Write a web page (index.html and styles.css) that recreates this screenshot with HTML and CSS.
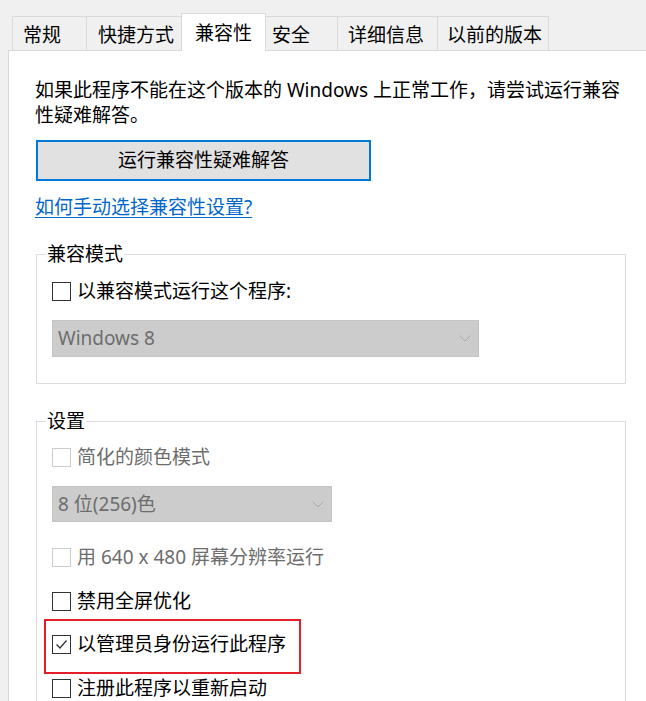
FILE: index.html
```html
<!DOCTYPE html>
<html lang="zh-CN">
<head>
<meta charset="utf-8">
<title>兼容性</title>
<link rel="stylesheet" href="styles.css">
</head>
<body>
<div class="tabs">
  <div class="tab tab-1">常规</div>
  <div class="tab tab-2">快捷方式</div>
  <div class="tab tab-3 active">兼容性</div>
  <div class="tab tab-4">安全</div>
  <div class="tab tab-5">详细信息</div>
  <div class="tab tab-6">以前的版本</div>
</div>
<div class="panel">
  <p class="intro">如果此程序不能在这个版本的 Windows 上正常工作，请尝试运行兼容性疑难解答。</p>
  <button class="btn" type="button">运行兼容性疑难解答</button>
  <a class="link" href="#">如何手动选择兼容性设置?</a>

  <fieldset class="group group-compat">
    <legend class="legend">兼容模式</legend>
    <div class="row row-first">
      <span class="box"></span><span class="label">以兼容模式运行这个程序:</span>
    </div>
    <div class="select select-wide">
      <span class="select-text">Windows 8</span>
      <svg class="chev" width="12" height="7" viewBox="0 0 12 7"><polyline points="0.5,0.5 6,6 11.5,0.5" fill="none" stroke="#a8a8a8" stroke-width="1"/></svg>
    </div>
  </fieldset>

  <fieldset class="group group-settings">
    <legend class="legend">设置</legend>
    <div class="row row-first2 disabled">
      <span class="box"></span><span class="label">简化的颜色模式</span>
    </div>
    <div class="select select-narrow">
      <span class="select-text">8 位(256)色</span>
      <svg class="chev" width="12" height="7" viewBox="0 0 12 7"><polyline points="0.5,0.5 6,6 11.5,0.5" fill="none" stroke="#a8a8a8" stroke-width="1"/></svg>
    </div>
    <div class="row row-640 disabled">
      <span class="box"></span><span class="label">用 640 x 480 屏幕分辨率运行</span>
    </div>
    <div class="row row-gap">
      <span class="box"></span><span class="label">禁用全屏优化</span>
    </div>
    <div class="row row-admin">
      <span class="box checked"><svg width="17" height="17" viewBox="0 0 17 17"><polyline points="3.5,8.5 7,12 13.5,4.5" fill="none" stroke="#333" stroke-width="1.3"/></svg></span><span class="label">以管理员身份运行此程序</span>
      <span class="annot"></span>
    </div>
    <div class="row row-gap">
      <span class="box"></span><span class="label">注册此程序以重新启动</span>
    </div>
  </fieldset>
</div>
</body>
</html>
```

FILE: styles.css
```css
html, body {
  margin: 0;
  padding: 0;
}
body {
  background: #f0f0f0;
  font-family: "Noto Sans", "Noto Sans CJK SC", sans-serif;
  font-size: 19px;
  line-height: 25px;
  color: #000;
  overflow: hidden;
  height: 701px;
}

/* Tabs */
.tabs {
  display: flex;
  align-items: flex-start;
  height: 50px;
  box-sizing: border-box;
  padding: 16px 0 0 12px;
}
.tab {
  box-sizing: border-box;
  height: 34px;
  border-top: 1px solid #d9d9d9;
  border-left: 1px solid #d9d9d9;
  background: #f0f0f0;
  padding-top: 3px;
  line-height: 30px;
  white-space: nowrap;
}
.tab-6 { border-right: 1px solid #d9d9d9; }
.tab-1 { width: 74px; padding-left: 10px; }
.tab-2 { width: 95px; padding-left: 11px; }
.tab-3 { width: 85px; padding-left: 13px; }
.tab-4 { width: 71px; padding-left: 6px; }
.tab-5 { width: 100px; padding-left: 10px; }
.tab-6 { width: 112px; padding-left: 9px; }
.tab.active {
  position: relative;
  z-index: 2;
  height: 38px;
  margin-top: -3px;
  background: #fff;
  border-right: 1px solid #d9d9d9;
  padding-top: 4px;
}
.tab.active + .tab { border-left: none; }

/* Panel */
.panel {
  margin-left: 8px;
  border-left: 1px solid #d9d9d9;
  border-top: 1px solid #d9d9d9;
  background: #fff;
  padding: 27px 0 0 26px;
  height: 623px;
  overflow: hidden;
}
.intro {
  margin: 0;
  width: 590px;
}
.btn {
  display: block;
  margin: 12px 0 0 1px;
  width: 335px;
  height: 41px;
  box-sizing: border-box;
  border: 2px solid #0078d7;
  background: #e1e1e1;
  font: inherit;
  color: #000;
  padding: 0;
  text-align: center;
}
.link {
  display: inline-block;
  margin-top: 14px;
  color: #0066cc;
  text-decoration: underline;
  text-underline-offset: 3px;
  text-decoration-thickness: 1px;
}

/* Group boxes */
.group {
  margin: 0 0 0 1px;
  width: 590px;
  box-sizing: border-box;
  border: 1px solid #dcdcdc;
  padding: 0 15px 26px 15px;
  min-inline-size: 0;
}
.group-compat { margin-top: 24px; }
.group-settings { margin-top: 27px; padding-bottom: 40px; }
.legend {
  padding: 0 1px;
  margin-left: -6px;
  line-height: 20px;
}

.row {
  position: relative;
  display: flex;
  align-items: center;
  height: 26px;
}
.row-first { margin-top: 14px; }
.row-first2 { margin-top: 13px; }
.row-640 { margin-top: 22px; }
.row-gap { margin-top: 18px; }
.row-admin { margin-top: 17px; }

.box {
  box-sizing: border-box;
  width: 19px;
  height: 19px;
  border: 1px solid #333;
  background: #fff;
  margin-right: 6px;
  flex: none;
  display: flex;
  align-items: center;
  justify-content: center;
}
.disabled .box { border-color: #cccccc; }
.disabled .label { color: #6d6d6d; }

.annot {
  position: absolute;
  left: -8px;
  top: -12px;
  width: 257px;
  height: 55px;
  box-sizing: border-box;
  border: 2px solid #e3202a;
}

/* Selects */
.select {
  display: flex;
  align-items: center;
  justify-content: space-between;
  box-sizing: border-box;
  background: #cccccc;
  border: 1px solid #c4c4c4;
  color: #6d6d6d;
  padding-left: 5px;
  margin-top: 16px;
}
.select-wide { width: 427px; height: 37px; }
.select-narrow { width: 280px; height: 36px; }
.chev { margin-right: 7px; }
```
